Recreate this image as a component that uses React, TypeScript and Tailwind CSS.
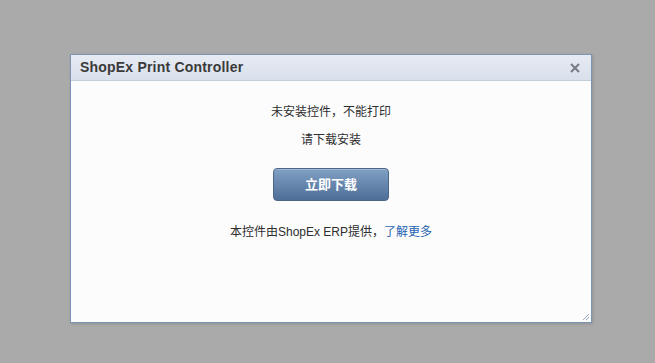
export default function App() {
  const cjk = { fontFamily: '"Liberation Sans", Arial, "Noto Sans CJK SC", sans-serif' }
  return (
    <div className="w-[655px] h-[363px] bg-[#aaaaaa] pt-[54px] pl-[70px]" style={cjk}>
      <div className="relative w-[522px] h-[269px] border border-[#7d93b4] bg-[#fcfcfd] flex flex-col shadow-[1px_1px_3px_rgba(0,0,0,0.15)]">
        <div className="h-[26px] shrink-0 flex items-center justify-between pl-[9px] pr-[11px] bg-gradient-to-b from-[#e6ebf3] to-[#d9e0eb] border-b border-[#c3cedd]">
          <span className="text-[14px] font-bold text-[#3a3a3a] tracking-[0.2px]">ShopEx Print Controller</span>
          <svg width="10" height="10" viewBox="0 0 10 10" className="mt-[1px]">
            <path d="M1 1 L9 9 M9 1 L1 9" stroke="#777c84" strokeWidth="2" />
          </svg>
        </div>
        <div className="flex flex-col items-center text-[12px] leading-[18px] text-[#2e2e2e]">
          <p className="mt-[22px]">未安装控件，不能打印</p>
          <p className="mt-[10px]">请下载安装</p>
          <button className="mt-[19px] w-[116px] h-[33px] rounded-[4px] border border-[#4d6587] bg-gradient-to-b from-[#80a0c4] to-[#4e6e98] text-white text-[13px] font-bold shadow-[inset_0_1px_0_rgba(255,255,255,0.25)]">
            立即下载
          </button>
          <p className="mt-[22px]">
            本控件由ShopEx ERP提供，<span className="text-[#1f63b0]">了解更多</span>
          </p>
        </div>
        <svg width="8" height="8" viewBox="0 0 8 8" className="absolute right-[1px] bottom-[1px]">
          <path d="M7 1 L1 7 M7 4 L4 7 M7 7 L7 7" stroke="#9aaac2" strokeWidth="1" />
        </svg>
      </div>
    </div>
  )
}
